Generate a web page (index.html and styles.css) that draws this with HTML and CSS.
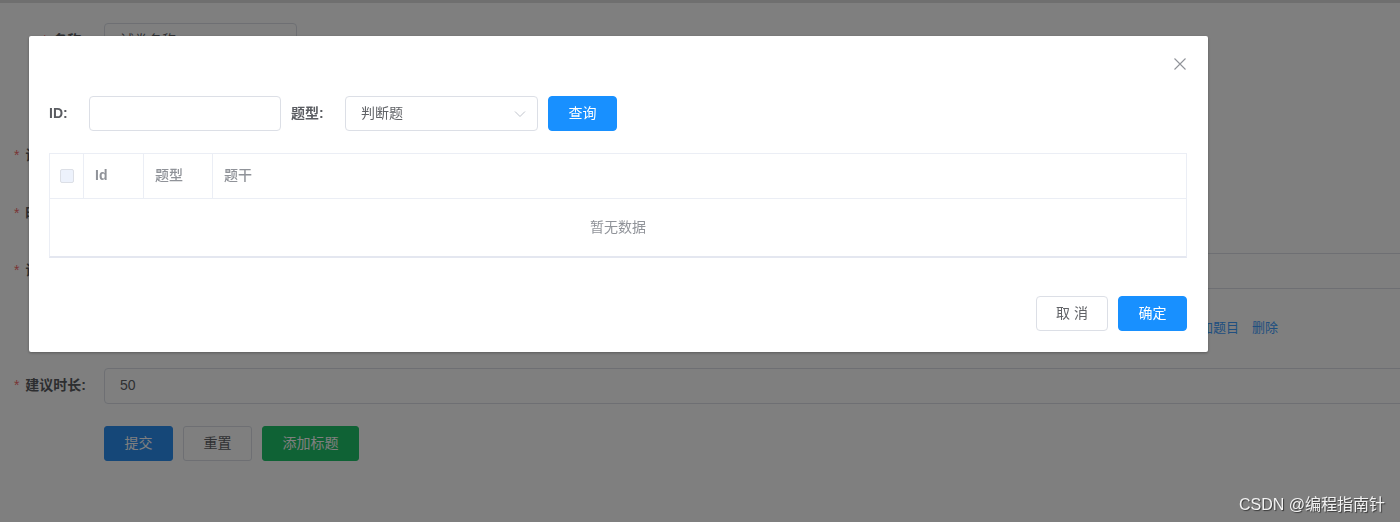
FILE: index.html
```html
<!DOCTYPE html>
<html lang="zh-CN">
<head>
<meta charset="utf-8">
<title>试卷管理</title>
<link rel="stylesheet" href="styles.css">
</head>
<body>
<div class="page">
  <form class="form">
    <div class="row">
      <label class="lbl req">名称:</label>
      <div class="ctl"><div class="input w-short">试卷名称</div></div>
    </div>
    <div class="row">
      <label class="lbl">描述:</label>
      <div class="ctl"><div class="input w-mid"></div></div>
    </div>
    <div class="row">
      <label class="lbl req">试卷总分:</label>
      <div class="ctl"><div class="input w-mid">100</div></div>
    </div>
    <div class="row">
      <label class="lbl req">时间限制:</label>
      <div class="ctl"><div class="input w-mid"></div></div>
    </div>
    <div class="row">
      <label class="lbl req">试卷类型:</label>
      <div class="ctl"><div class="input w-full"></div></div>
    </div>
    <div class="row">
      <label class="lbl">标题:</label>
      <div class="ctl">
        <div class="input w-title"></div>
        <a class="link">添加题目</a>
        <a class="link">删除</a>
      </div>
    </div>
    <div class="row">
      <label class="lbl req">建议时长:</label>
      <div class="ctl"><div class="input w-full">50</div></div>
    </div>
    <div class="row">
      <span class="lbl"></span>
      <div class="ctl actions">
        <span class="pbtn pbtn-blue">提交</span>
        <span class="pbtn pbtn-plain">重置</span>
        <span class="pbtn pbtn-green">添加标题</span>
      </div>
    </div>
  </form>
</div>

<div class="mask"></div>

<div class="dialog">
  <div class="dlg-head">
    <span class="close">
      <svg width="12" height="12" viewBox="0 0 12 12"><path d="M0.5 0.5 L11.5 11.5 M11.5 0.5 L0.5 11.5" stroke="#909399" stroke-width="1.1" fill="none"/></svg>
    </span>
  </div>
  <div class="dlg-body">
    <div class="search">
      <span class="s-label">ID:</span>
      <span class="s-input"></span>
      <span class="s-label s-label2">题型:</span>
      <span class="s-select">
        <span>判断题</span>
        <svg width="12" height="8" viewBox="0 0 12 8"><path d="M1 1.5 L6 6.5 L11 1.5" stroke="#c0c4cc" stroke-width="1" fill="none"/></svg>
      </span>
      <span class="btn btn-primary btn-query">查询</span>
    </div>
    <div class="table">
      <div class="thead">
        <div class="th c-check"><span class="cb"></span></div>
        <div class="th c-id">Id</div>
        <div class="th c-type">题型</div>
        <div class="th c-stem">题干</div>
      </div>
      <div class="empty">暂无数据</div>
    </div>
  </div>
  <div class="dlg-foot">
    <span class="btn btn-cancel">取 消</span>
    <span class="btn btn-primary btn-ok">确定</span>
  </div>
</div>

<div class="watermark">CSDN @编程指南针</div>
</body>
</html>
```

FILE: styles.css
```css
* { box-sizing: border-box; }

html, body {
  margin: 0;
  padding: 0;
  width: 1400px;
  height: 522px;
  overflow: hidden;
  background: #fff;
  font-family: "Liberation Sans", "Noto Sans CJK SC", sans-serif;
  font-size: 14px;
  line-height: 1.4;
  color: #606266;
}

.page {
  border-top: 3px solid #dedede;
  height: 100%;
}

.form {
  padding-top: 20px;
  margin-right: -20px;
  display: flex;
  flex-direction: column;
  gap: 21.5px;
}

.row {
  display: flex;
  align-items: center;
  height: 36px;
}

.lbl {
  width: 104px;
  flex: none;
  padding-right: 18px;
  text-align: right;
  font-weight: 700;
  color: #5a5c61;
}

.lbl.req::before {
  content: "*";
  color: #f56c6c;
  margin-right: 6px;
  font-weight: 400;
}

.ctl {
  flex: 1;
  display: flex;
  align-items: center;
  min-width: 0;
}

.input {
  height: 36px;
  border: 1px solid #dcdfe6;
  border-radius: 4px;
  padding: 0 15px;
  display: flex;
  align-items: center;
  color: #606266;
  background: #fff;
}

.w-short { width: 193px; }
.w-mid { width: 500px; }
.w-full { flex: 1; }
.w-title { width: 1070px; }

.link {
  color: #409eff;
  font-size: 13px;
  margin-left: 13px;
}

.actions { gap: 10px; }

.pbtn {
  display: inline-flex;
  align-items: center;
  justify-content: center;
  height: 35px;
  white-space: nowrap;
  border: 1px solid #dcdfe6;
  border-radius: 3px;
  color: #606266;
  background: #fff;
}

.pbtn-blue {
  background: #2b8ef0;
  border-color: #2b8ef0;
  color: #fff;
  width: 69px;
}

.pbtn-plain { width: 69px; }

.pbtn-green {
  background: #1fc46a;
  border-color: #1fc46a;
  color: #fff;
  width: 97px;
}

.mask {
  position: fixed;
  inset: 0;
  background: rgba(0, 0, 0, 0.5);
}

.dialog {
  position: fixed;
  left: 29px;
  top: 36px;
  width: 1179px;
  height: 316px;
  background: #fff;
  border-radius: 2px;
  box-shadow: 0 1px 3px rgba(0, 0, 0, 0.3);
  display: flex;
  flex-direction: column;
}

.dlg-head {
  height: 60px;
  flex: none;
  display: flex;
  justify-content: flex-end;
  padding: 22px 22px 0 0;
}

.close {
  display: block;
  width: 12px;
  height: 12px;
}

.close svg { display: block; }

.dlg-body {
  padding: 0 21px 0 20px;
}

.search {
  display: flex;
  align-items: center;
  height: 35px;
}

.s-label {
  font-weight: 700;
  color: #5a5c61;
  width: 40px;
  flex: none;
}

.s-label2 {
  width: 54px;
  margin-left: 10px;
}

.s-input {
  width: 192px;
  height: 35px;
  border: 1px solid #dcdfe6;
  border-radius: 4px;
}

.s-select {
  width: 193px;
  height: 35px;
  border: 1px solid #dcdfe6;
  border-radius: 4px;
  display: flex;
  align-items: center;
  justify-content: space-between;
  padding: 0 11px 0 15px;
  color: #606266;
}

.s-select svg { display: block; }

.btn {
  display: inline-flex;
  align-items: center;
  justify-content: center;
  height: 35px;
  border-radius: 4px;
  font-size: 14px;
  white-space: nowrap;
  border: 1px solid #dcdfe6;
  color: #606266;
  background: #fff;
}

.btn-primary {
  background: #1890ff;
  border-color: #1890ff;
  color: #fff;
}

.btn-query {
  width: 69px;
  margin-left: 10px;
}

.table {
  margin-top: 22px;
  border: 1px solid #ebeef5;
  border-bottom: 2px solid #e4e7f0;
}

.thead {
  display: flex;
  height: 45px;
  border-bottom: 1px solid #ebeef5;
}

.th {
  display: flex;
  align-items: center;
  padding-left: 11px;
  color: #909399;
  font-weight: 500;
  border-right: 1px solid #ebeef5;
}

.c-check {
  width: 34px;
  padding-left: 0;
  justify-content: center;
}

.c-id { width: 60px; font-weight: 700; }
.c-type { width: 69px; }
.c-stem { flex: 1; border-right: none; }

.cb {
  width: 14px;
  height: 14px;
  border: 1px solid #dcdfe6;
  border-radius: 2px;
  background: #edf2fc;
}

.empty {
  height: 57px;
  display: flex;
  align-items: center;
  justify-content: center;
  color: #909399;
}

.dlg-foot {
  margin-top: auto;
  display: flex;
  justify-content: flex-end;
  gap: 10px;
  padding: 0 21px 21px 0;
}

.btn-cancel { width: 72px; }
.btn-ok { width: 69px; }

.watermark {
  position: fixed;
  right: 15px;
  bottom: 8px;
  font-size: 16px;
  line-height: 1.2;
  color: #f2f2f2;
  text-shadow: 1px 1px 1px rgba(0, 0, 0, 0.55);
}
```
